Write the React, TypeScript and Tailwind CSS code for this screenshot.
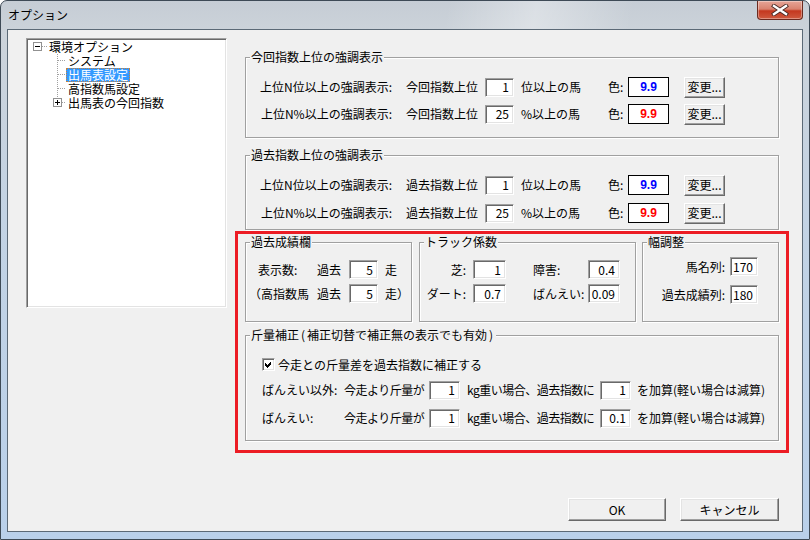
import React from "react";

function Edit({ v, cls }: { v: string; cls: string }) {
  return (
    <div
      className={
        "shrink-0 bg-white border border-t-[#a0a0a0] border-l-[#a0a0a0] border-r-white border-b-white shadow-[inset_1px_1px_0_#696969,inset_-1px_-1px_0_#e3e3e3] flex items-center justify-end pr-[4px] leading-none " +
        cls
      }
    >
      {v}
    </div>
  );
}

function Btn({ children, cls }: { children: React.ReactNode; cls: string }) {
  return (
    <div
      className={
        "shrink-0 flex items-center justify-center bg-[#f0f0f0] border border-t-white border-l-white border-r-[#696969] border-b-[#696969] shadow-[inset_-1px_-1px_0_#a0a0a0,inset_1px_1px_0_#e3e3e3] leading-none " +
        cls
      }
    >
      {children}
    </div>
  );
}

function Group({ title, cls, children }: { title: React.ReactNode; cls: string; children?: React.ReactNode }) {
  return (
    <div className={"relative shrink-0 border border-[#a0a0a0] shadow-[inset_1px_1px_0_#ffffff,1px_1px_0_#ffffff] " + cls}>
      <span className="absolute left-[4px] -top-[8px] px-[1px] bg-[#f0f0f0] leading-[14px] whitespace-nowrap">{title}</span>
      {children}
    </div>
  );
}

function ColorBox({ color }: { color: "blue" | "red" }) {
  return (
    <div className="shrink-0 w-[41px] h-[20px] bg-white border border-black flex items-center justify-center">
      <span
        className={
          "font-['Liberation_Sans',sans-serif] font-bold text-[12px] leading-none " +
          (color === "blue" ? "text-[#0000ff]" : "text-[#ff0000]")
        }
      >
        9.9
      </span>
    </div>
  );
}

function RankRow({ label, mid, v, after, color }: { label: string; mid: string; v: string; after: string; color: "blue" | "red" }) {
  return (
    <div className="flex items-center h-[20px] whitespace-nowrap">
      <span className="shrink-0 w-[146px] text-right">{label}</span>
      <span className="shrink-0 ml-[14px] w-[79px]">{mid}</span>
      <Edit v={v} cls="w-[29px] h-[19px]" />
      <span className="shrink-0 ml-[7px] w-[87px]">{after}</span>
      <span className="shrink-0 w-[20px]">色:</span>
      <ColorBox color={color} />
      <Btn cls="ml-[15px] w-[41px] h-[21px]">変更...</Btn>
    </div>
  );
}

function WeightRow({ label, v2 }: { label: string; v2: string }) {
  return (
    <div className="flex items-center h-[20px] whitespace-nowrap">
      <span className="shrink-0 w-[98px] pl-[16px]">{label}</span>
      <span className="shrink-0 w-[85px] tracking-[-0.5px]">今走より斤量が</span>
      <Edit v="1" cls="w-[31px] h-[19px]" />
      <span className="shrink-0 ml-[7px] w-[133px] tracking-[-0.5px]">kg重い場合、過去指数に</span>
      <Edit v={v2} cls="w-[31px] h-[19px]" />
      <span className="ml-[6px]">を加算(軽い場合は減算)</span>
    </div>
  );
}

function Tree() {
  const dot = "#a0a0a0";
  return (
    <div className="relative shrink-0 ml-[18px] mt-[8px] w-[201px] h-[270px] bg-white border border-t-[#a0a0a0] border-l-[#a0a0a0] border-r-white border-b-white shadow-[inset_1px_1px_0_#696969,inset_-1px_-1px_0_#e3e3e3] pt-[1px]">
      <svg className="absolute left-0 top-0" width="120" height="80" shapeRendering="crispEdges">
        <rect x="6.5" y="3.5" width="8" height="8" fill="#fff" stroke="#919191" />
        <line x1="8" y1="7.5" x2="13" y2="7.5" stroke="#000" />
        <line x1="15" y1="7.5" x2="21" y2="7.5" stroke={dot} strokeDasharray="1 1" />
        <line x1="30.5" y1="15" x2="30.5" y2="59" stroke={dot} strokeDasharray="1 1" />
        {[21.5, 35.5, 49.5].map((y) => (
          <line key={y} x1="31" y1={y} x2="39" y2={y} stroke={dot} strokeDasharray="1 1" />
        ))}
        <line x1="35" y1="63.5" x2="39" y2="63.5" stroke={dot} strokeDasharray="1 1" />
        <rect x="26.5" y="59.5" width="8" height="8" fill="#fff" stroke="#919191" />
        <line x1="28" y1="63.5" x2="33" y2="63.5" stroke="#000" />
        <line x1="30.5" y1="61" x2="30.5" y2="66" stroke="#000" />
      </svg>
      <div className="relative flex flex-col">
        <div className="h-[14px] flex items-center pl-[22px] whitespace-nowrap">環境オプション</div>
        <div className="h-[14px] flex items-center pl-[39px] whitespace-nowrap">
          <span className="px-[2px]">システム</span>
        </div>
        <div className="h-[14px] flex items-center pl-[39px] whitespace-nowrap">
          <span className="px-[2px] h-[14px] flex items-center bg-[#3399ff] text-white outline outline-1 outline-dotted outline-[#c8813a] -outline-offset-1">
            出馬表設定
          </span>
        </div>
        <div className="h-[14px] flex items-center pl-[39px] whitespace-nowrap">
          <span className="px-[2px]">高指数馬設定</span>
        </div>
        <div className="h-[14px] flex items-center pl-[39px] whitespace-nowrap">
          <span className="px-[2px]">出馬表の今回指数</span>
        </div>
      </div>
    </div>
  );
}

export default function App() {
  return (
    <div className="relative w-[810px] h-[540px] overflow-hidden flex flex-col rounded-t-[7px] border border-[#3e4a56] bg-[linear-gradient(180deg,#c6cdd5_0%,#ccd3da_6%,#c3d3e4_40%,#b9d0ea_100%)] text-[12px] leading-[14px] text-black font-['Noto_Sans_CJK_JP',sans-serif]">
      {/* title bar */}
      <div className="h-[28px] flex items-start shrink-0 bg-[linear-gradient(100deg,transparent_55%,rgba(255,255,255,0.35)_66%,transparent_78%)]">
        <span className="pl-[7px] pt-[7px] leading-[14px] text-[12px]">オプション</span>
        <div className="ml-auto mr-[6px] w-[46px] h-[19px] rounded-b-[4px] border border-t-0 border-[#6b2a1f] bg-[linear-gradient(180deg,#e6a597_0%,#d9826f_45%,#c4381f_55%,#cf5a3f_100%)] shadow-[inset_0_0_0_1px_rgba(255,255,255,0.35)] flex items-center justify-center">
          <svg width="18" height="12" viewBox="0 0 18 12">
            <path d="M3 2 L15 10 M15 2 L3 10" stroke="#4a2a25" strokeWidth="4.2" strokeLinecap="square" />
            <path d="M3 2 L15 10 M15 2 L3 10" stroke="#ffffff" strokeWidth="2.4" strokeLinecap="square" />
          </svg>
        </div>
      </div>

      {/* client area */}
      <div className="mx-[6px] h-[503px] shrink-0 border border-[#5b6976] bg-[#f0f0f0] flex flex-col">
        <div className="flex items-start">
          <Tree />
          <div className="ml-[18px] w-[534px] flex flex-col">
            <Group title="今回指数上位の強調表示" cls="mt-[27px] pt-[19px] pb-[13px]">
              <RankRow label="上位N位以上の強調表示:" mid="今回指数上位" v="1" after="位以上の馬" color="blue" />
              <div className="h-[7px]" />
              <RankRow label="上位N%以上の強調表示:" mid="今回指数上位" v="25" after="%以上の馬" color="red" />
            </Group>

            <Group title="過去指数上位の強調表示" cls="mt-[17px] pt-[19px] pb-[6px]">
              <RankRow label="上位N位以上の強調表示:" mid="過去指数上位" v="1" after="位以上の馬" color="blue" />
              <div className="h-[8px]" />
              <RankRow label="上位N%以上の強調表示:" mid="過去指数上位" v="25" after="%以上の馬" color="red" />
            </Group>

            <div className="mt-[12px] flex">
              <Group title="過去成績欄" cls="w-[167px] h-[80px] pt-[17px]">
                <div className="flex items-center h-[19px] whitespace-nowrap">
                  <span className="shrink-0 w-[71px] pl-[12px]">表示数:</span>
                  <span className="shrink-0 w-[32px]">過去</span>
                  <Edit v="5" cls="w-[29px] h-[19px]" />
                  <span className="ml-[7px]">走</span>
                </div>
                <div className="mt-[5px] flex items-center h-[19px] whitespace-nowrap">
                  <span className="shrink-0 w-[71px] pl-[3px]">（高指数馬</span>
                  <span className="shrink-0 w-[32px]">過去</span>
                  <Edit v="5" cls="w-[29px] h-[19px]" />
                  <span className="ml-[7px]">走）</span>
                </div>
              </Group>

              <Group title="トラック係数" cls="ml-[7px] w-[217px] h-[80px] pt-[17px]">
                <div className="flex items-center h-[19px] whitespace-nowrap">
                  <span className="shrink-0 w-[46px] text-right">芝:</span>
                  <Edit v="1" cls="ml-[7px] w-[33px] h-[19px]" />
                  <span className="shrink-0 ml-[27px] w-[55px]">障害:</span>
                  <Edit v="0.4" cls="w-[32px] h-[19px]" />
                </div>
                <div className="mt-[5px] flex items-center h-[19px] whitespace-nowrap">
                  <span className="shrink-0 w-[46px] text-right">ダート:</span>
                  <Edit v="0.7" cls="ml-[7px] w-[33px] h-[19px]" />
                  <span className="shrink-0 ml-[27px] w-[55px]">ばんえい:</span>
                  <Edit v="0.09" cls="w-[32px] h-[19px]" />
                </div>
              </Group>

              <Group title="幅調整" cls="ml-[6px] w-[137px] h-[80px] pt-[14px]">
                <div className="flex items-center h-[19px] whitespace-nowrap">
                  <span className="shrink-0 w-[82px] text-right">馬名列:</span>
                  <Edit v="170" cls="ml-[5px] w-[28px] h-[19px]" />
                </div>
                <div className="mt-[9px] flex items-center h-[19px] whitespace-nowrap">
                  <span className="shrink-0 w-[82px] text-right">過去成績列:</span>
                  <Edit v="180" cls="ml-[5px] w-[28px] h-[19px]" />
                </div>
              </Group>
            </div>

            <Group
              title={
                <>
                  斤量補正<span className="px-[2px]">(</span>補正切替で補正無の表示でも有効<span className="px-[2px]">)</span>
                </>
              }
              cls="mt-[13px] pt-[22px] pb-[12px]"
            >
              <div className="flex items-center h-[13px] whitespace-nowrap">
                <div className="ml-[16px] w-[13px] h-[13px] bg-white border border-t-[#a0a0a0] border-l-[#a0a0a0] border-r-white border-b-white shadow-[inset_1px_1px_0_#696969,inset_-1px_-1px_0_#e3e3e3] flex items-center justify-center">
                  <svg width="9" height="9" viewBox="0 0 9 9" shapeRendering="crispEdges">
                    <path d="M1 3 L3 5 L7 1 L7 4 L3 8 L1 6 Z" fill="#000" />
                  </svg>
                </div>
                <span className="ml-[3px]">今走との斤量差を過去指数に補正する</span>
              </div>
              <div className="mt-[9px]">
                <WeightRow label="ばんえい以外:" v2="1" />
              </div>
              <div className="mt-[8px]">
                <WeightRow label="ばんえい:" v2="0.1" />
              </div>
            </Group>
          </div>
        </div>

        <div className="mt-auto mb-[10px] mr-[23px] self-end flex gap-[14px]">
          <Btn cls="w-[98px] h-[23px]">OK</Btn>
          <Btn cls="w-[99px] h-[23px]">キャンセル</Btn>
        </div>
      </div>

      {/* red annotation rectangle */}
      <div className="absolute left-[234px] top-[230px] w-[554px] h-[222px] border-[3px] border-[#ec1c24] pointer-events-none" />
    </div>
  );
}
